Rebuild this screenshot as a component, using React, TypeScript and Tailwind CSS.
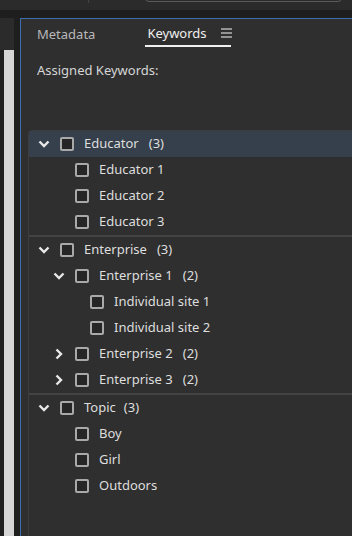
type Node = {
  label: string
  count?: number
  gap?: string
  level: number
  open?: boolean
  hasChildren?: boolean
  selected?: boolean
}

const groups: Node[][] = [
  [
    { label: "Educator", count: 3, level: 0, open: true, hasChildren: true, selected: true },
    { label: "Educator 1", level: 1 },
    { label: "Educator 2", level: 1 },
    { label: "Educator 3", level: 1 },
  ],
  [
    { label: "Enterprise", count: 3, level: 0, open: true, hasChildren: true },
    { label: "Enterprise 1", count: 2, level: 1, open: true, hasChildren: true },
    { label: "Individual site 1", level: 2 },
    { label: "Individual site 2", level: 2 },
    { label: "Enterprise 2", count: 2, level: 1, hasChildren: true },
    { label: "Enterprise 3", count: 2, level: 1, hasChildren: true },
  ],
  [
    { label: "Topic", count: 3, level: 0, open: true, hasChildren: true, gap: "ml-[8px]" },
    { label: "Boy", level: 1 },
    { label: "Girl", level: 1 },
    { label: "Outdoors", level: 1 },
  ],
]

const indent = ["pl-[9px]", "pl-[24px]", "pl-[39px]"]

function Chevron({ open }: { open?: boolean }) {
  return (
    <svg width="12" height="12" viewBox="0 0 12 12" className="text-[#e8e8e8]">
      {open ? (
        <path d="M1.5 3.5 L6 8 L10.5 3.5" fill="none" stroke="currentColor" strokeWidth="2.4" />
      ) : (
        <path d="M3.5 1.5 L8 6 L3.5 10.5" fill="none" stroke="currentColor" strokeWidth="2.4" />
      )}
    </svg>
  )
}

function Row({ node }: { node: Node }) {
  return (
    <div
      className={`flex h-[26px] items-center ${indent[node.level]} ${
        node.selected ? "bg-[#36404c]" : ""
      }`}
    >
      <span className="flex w-[12px] items-center justify-center">
        {node.hasChildren && <Chevron open={node.open} />}
      </span>
      <span className="ml-[10px] h-[14px] w-[14px] rounded-[2px] border-2 border-[#a9a9a9] bg-[#262626]" />
      <span className="ml-[10px] text-[13px] text-[#dedede]">{node.label}</span>
      {node.count !== undefined && (
        <span className={`${node.gap ?? "ml-[10px]"} text-[13px] text-[#dedede]`}>
          ({node.count})
        </span>
      )}
    </div>
  )
}

export default function App() {
  return (
    <div
      className="flex h-[536px] w-[352px] flex-col overflow-hidden bg-[#1e1e1e]"
      style={{ fontFamily: '"Noto Sans", "Open Sans", sans-serif' }}
    >
      {/* top toolbar remnant */}
      <div className="relative h-[10px] shrink-0 bg-[#2b2b2b]">
        <div className="absolute left-[88px] top-0 h-[3px] w-px bg-[#444]" />
        <div className="absolute left-[145px] top-[-8px] h-[10px] w-[197px] rounded-[4px] border border-[#5a5a5a]" />
      </div>
      <div className="h-[8px] shrink-0" />

      <div className="flex flex-1">
        {/* left strip */}
        <div className="flex w-[14px] flex-col bg-[#1f1f1f]">
          <div className="h-[32px] bg-[#2b2b2b]" />
          <div className="ml-[4px] flex-1 bg-[#d5d5d5]" />
        </div>
        <div className="w-[6px]" />

        {/* panel */}
        <div className="flex flex-1 flex-col border-l border-t border-[#3f6eb0] bg-[#2f2f2f]">
          <div className="flex h-[28px] items-end pl-[16px]">
            <span className="pb-[3px] text-[13px] text-[#b8b8b8]">Metadata</span>
            <div className="ml-[50px] flex items-center border-b-2 border-[#f0f0f0] pb-[2px] pl-[2px]">
              <span className="text-[13px] text-[#f0f0f0]">Keywords</span>
              <svg width="12" height="10" viewBox="0 0 12 10" className="-mr-[2px] ml-[14px] text-[#b5b5b5]">
                <path d="M0 1h11M0 5h11M0 9h11" stroke="currentColor" strokeWidth="1.3" />
              </svg>
            </div>
          </div>
          <div className="pl-[16px] pt-[14px] text-[13px] text-[#d6d6d6]">Assigned Keywords:</div>

          <div className="ml-[7px] mt-[49px] flex-1 rounded-tl-[5px] border-l border-t border-[#3d3d3d] bg-[#2f2f2f]">
            {groups.map((g, gi) => (
              <div key={gi} className={gi > 0 ? "border-t-2 border-[#434343]" : ""}>
                {g.map((n, i) => (
                  <Row key={i} node={n} />
                ))}
              </div>
            ))}
          </div>
        </div>
      </div>
    </div>
  )
}
